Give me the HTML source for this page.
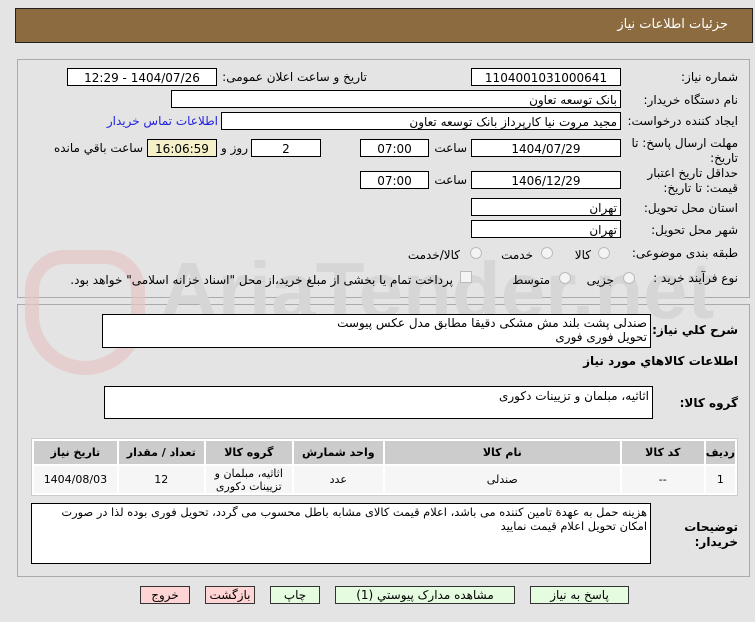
<!DOCTYPE html>
<html><head><meta charset="utf-8"><style>
*{margin:0;padding:0;box-sizing:border-box}
body{width:755px;height:622px;background:#e4e4e4;font-family:"DejaVu Sans","Liberation Sans",sans-serif;font-size:12px;color:#000;position:relative;overflow:hidden}
.a{position:absolute}
.l{position:absolute;direction:rtl;text-align:right;white-space:nowrap}
.b{position:absolute;background:#fff;border:1px solid #000;direction:rtl;text-align:right;padding:1px 3px;white-space:nowrap;line-height:16px}
.c{text-align:center}
.r{position:absolute;width:12px;height:12px;border-radius:50%;border:1px solid #bbb;background:#f4f4f4}
.btn{position:absolute;border:1px solid #333;text-align:center;line-height:16px;direction:rtl;font-size:12px}
table{position:absolute;border-collapse:separate;border-spacing:2px;background:#fff;border:1px solid #ccc}
td{background:#f6f6f6;text-align:center;direction:rtl;font-size:11px}
th{background:#ccc;font-weight:bold;direction:rtl;font-size:11px;height:23px}
</style></head><body>
<div class="a" style="left:15px;top:8px;width:738px;height:35px;background:#8b6b3f;border:1px solid #222"></div>
<div class="l" style="right:27px;top:17px;color:#fff;font-size:13px">جزئیات اطلاعات نیاز</div>

<div class="a" style="left:17px;top:59px;width:733px;height:239px;border:1px solid #aaa;background:#e4e4e4"></div>
<div class="a" style="left:17px;top:304px;width:733px;height:273px;border:1px solid #aaa;background:#e4e4e4"></div>

<!-- watermark -->
<div class="a" style="left:25px;top:250px;width:120px;height:125px;border:14px solid #e6c4c4;border-radius:40px 40px 60px 60px;opacity:.7"></div>
<div class="l" style="left:160px;top:245px;font-size:80px;font-weight:bold;color:#d6d6d6;direction:ltr;text-align:left;font-family:'Liberation Sans',sans-serif">AriaTender.net</div>

<div class="l" style="right:17px;top:70px">شماره نیاز:</div>
<div class="b c" style="left:471px;top:68px;width:150px;height:18px">1104001031000641</div>
<div class="l" style="right:388px;top:70px">تاریخ و ساعت اعلان عمومی:</div>
<div class="b c" style="left:67px;top:68px;width:150px;height:18px">1404/07/26 - 12:29</div>

<div class="l" style="right:17px;top:93px">نام دستگاه خریدار:</div>
<div class="b" style="left:171px;top:90px;width:450px;height:18px">بانک توسعه تعاون</div>

<div class="l" style="right:17px;top:114px">ایجاد کننده درخواست:</div>
<div class="b" style="left:221px;top:112px;width:400px;height:18px">مجید مروت نیا کارپرداز بانک توسعه تعاون</div>
<div class="l" style="right:537px;top:114px;color:#2222dd">اطلاعات تماس خریدار</div>

<div class="l" style="right:17px;top:136px;line-height:15px">مهلت ارسال پاسخ: تا<br>تاریخ:</div>
<div class="b c" style="left:471px;top:139px;width:150px;height:18px">1404/07/29</div>
<div class="l" style="right:288px;top:141px">ساعت</div>
<div class="b c" style="left:360px;top:139px;width:69px;height:18px">07:00</div>
<div class="b c" style="left:251px;top:139px;width:70px;height:18px">2</div>
<div class="l" style="right:507px;top:141px">روز و</div>
<div class="b c" style="left:147px;top:139px;width:70px;height:18px;background:#f5f0c8">16:06:59</div>
<div class="l" style="right:612px;top:141px">ساعت باقي مانده</div>

<div class="l" style="right:17px;top:166px;line-height:15px">حداقل تاریخ اعتبار<br>قیمت: تا تاریخ:</div>
<div class="b c" style="left:471px;top:171px;width:150px;height:18px">1406/12/29</div>
<div class="l" style="right:288px;top:173px">ساعت</div>
<div class="b c" style="left:360px;top:171px;width:69px;height:18px">07:00</div>

<div class="l" style="right:17px;top:201px">استان محل تحویل:</div>
<div class="b" style="left:471px;top:198px;width:150px;height:18px">تهران</div>
<div class="l" style="right:17px;top:223px">شهر محل تحویل:</div>
<div class="b" style="left:471px;top:220px;width:150px;height:18px">تهران</div>

<div class="l" style="right:17px;top:246px">طبقه بندی موضوعی:</div>
<div class="r" style="left:598px;top:247px"></div><div class="l" style="right:164px;top:248px">کالا</div>
<div class="r" style="left:541px;top:247px"></div><div class="l" style="right:222px;top:248px">خدمت</div>
<div class="r" style="left:470px;top:247px"></div><div class="l" style="right:295px;top:248px">کالا/خدمت</div>

<div class="l" style="right:17px;top:271px">نوع فرآیند خرید :</div>
<div class="r" style="left:623px;top:272px"></div><div class="l" style="right:141px;top:273px">جزیی</div>
<div class="r" style="left:559px;top:272px"></div><div class="l" style="right:205px;top:273px">متوسط</div>
<div class="a" style="left:460px;top:271px;width:12px;height:12px;border:1px solid #bbb;background:#f4f4f4"></div>
<div class="l" style="right:302px;top:273px">پرداخت تمام یا بخشی از مبلغ خرید،از محل "اسناد خزانه اسلامی" خواهد بود.</div>

<div class="l" style="right:17px;top:323px;font-weight:bold">شرح کلي نیاز:</div>
<div class="b" style="left:102px;top:314px;width:549px;height:34px;line-height:14px;white-space:normal">صندلی پشت بلند مش مشکی دقیقا مطابق مدل عکس پیوست<br>تحویل فوری فوری</div>
<div class="l" style="right:17px;top:354px;font-weight:bold">اطلاعات کالاهاي مورد نیاز</div>

<div class="l" style="right:17px;top:396px;font-weight:bold">گروه کالا:</div>
<div class="b" style="left:104px;top:386px;width:549px;height:33px">اثاثیه، مبلمان و تزیینات دکوری</div>

<table style="left:31px;top:438px;width:707px;height:58px" dir="rtl">
<tr><th style="width:27px">ردیف</th><th style="width:82px">کد کالا</th><th style="width:235px">نام کالا</th><th style="width:89px">واحد شمارش</th><th style="width:86px">گروه کالا</th><th style="width:85px">تعداد / مقدار</th><th>تاریخ نیاز</th></tr>
<tr><td>1</td><td>--</td><td>صندلی</td><td>عدد</td><td style="line-height:13px">اثاثیه، مبلمان و<br>تزیینات دکوری</td><td>12</td><td>1404/08/03</td></tr>
</table>

<div class="l" style="right:17px;top:520px;font-weight:bold;line-height:15px">توضیحات<br>خریدار:</div>
<div class="b" style="left:31px;top:503px;width:620px;height:61px;white-space:normal;line-height:14px;font-size:11.4px;letter-spacing:-0.2px">هزینه حمل به عهدة تامین کننده می باشد، اعلام قیمت کالای مشابه باطل محسوب می گردد، تحویل فوری بوده لذا در صورت امکان تحویل اعلام قیمت نمایید</div>

<div class="btn" style="left:530px;top:586px;width:99px;height:18px;background:#e6fce0">پاسخ به نیاز</div>
<div class="btn" style="left:335px;top:586px;width:180px;height:18px;background:#e6fce0">مشاهده مدارک پیوستي (1)</div>
<div class="btn" style="left:270px;top:586px;width:50px;height:18px;background:#e6fce0">چاپ</div>
<div class="btn" style="left:205px;top:586px;width:50px;height:18px;background:#ffd4d4">بازگشت</div>
<div class="btn" style="left:140px;top:586px;width:50px;height:18px;background:#ffd4d4">خروج</div>
</body></html>
